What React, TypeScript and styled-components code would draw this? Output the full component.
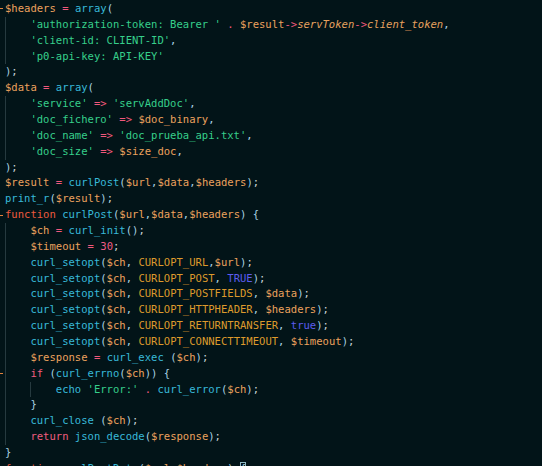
import React from "react";
import styled, { createGlobalStyle, css } from "styled-components";

const Global = createGlobalStyle`
  html, body {
    margin: 0;
    padding: 0;
    width: 542px;
    height: 466px;
    overflow: hidden;
    background: #021418;
  }
  #root { height: 466px; }
`;

type Kind =
  | "v" // variable
  | "op" // operator
  | "fn" // function name
  | "p" // punctuation
  | "s" // string
  | "c" // constant
  | "b" // boolean
  | "kw" // function keyword
  | "kw2" // if / return
  | "n" // number
  | "prop" // property
  | "t" // plain
  | "box"; // matched bracket

const colors: Record<Kind, string> = {
  v: "#eca25e",
  op: "#f2587c",
  fn: "#38b9d8",
  p: "#a9d3e2",
  s: "#36cf8b",
  c: "#dd9a2c",
  b: "#5c5ced",
  kw: "#ec5a3e",
  kw2: "#ef5d7e",
  n: "#ef5a86",
  prop: "#e7a25f",
  t: "#c8d3d6",
  box: "#a9d3e2",
};

const Editor = styled.div`
  box-sizing: border-box;
  width: 542px;
  height: 466px;
  overflow: hidden;
  padding-top: 1px;
  background: #021418;
  font-family: "DejaVu Sans Mono", "Liberation Mono", monospace;
  font-size: 10.55px;
  display: flex;
  flex-direction: column;
`;

const Line = styled.div`
  display: flex;
  align-items: stretch;
  height: 15.86px;
  line-height: 15.86px;
  white-space: pre;
  flex-shrink: 0;
`;

const Gutter = styled.span<{ $mark?: boolean }>`
  width: 5px;
  flex-shrink: 0;
  display: flex;
  align-items: center;
  &::before {
    content: "";
    display: ${(p) => (p.$mark ? "block" : "none")};
    width: 3px;
    height: 1px;
    background: #e2823c;
  }
`;

const Indent = styled.span`
  box-sizing: border-box;
  width: 25.4px;
  flex-shrink: 0;
  border-left: 1px solid #263a3f;
`;

const Code = styled.span`
  display: inline-block;
`;

const Tok = styled.span<{ $k: Kind }>`
  color: ${(p) => colors[p.$k]};
  ${(p) =>
    p.$k === "prop" &&
    css`
      font-style: italic;
    `}
  ${(p) =>
    p.$k === "box" &&
    css`
      outline: 1px solid #8fb8c4;
      outline-offset: -1px;
    `}
`;

type L = { indent: number; mark?: boolean; toks: [Kind, string][] };

const lines: L[] = [
  { indent: 0, mark: true, toks: [["v", "$headers"], ["t", " "], ["op", "="], ["t", " "], ["fn", "array"], ["p", "("]] },
  {
    indent: 1,
    toks: [
      ["s", "'authorization-token: Bearer '"],
      ["t", " "],
      ["op", "."],
      ["t", " "],
      ["v", "$result"],
      ["op", "->"],
      ["prop", "servToken"],
      ["op", "->"],
      ["prop", "client_token"],
      ["p", ","],
    ],
  },
  { indent: 1, toks: [["s", "'client-id: CLIENT-ID'"], ["p", ","]] },
  { indent: 1, toks: [["s", "'p0-api-key: API-KEY'"]] },
  { indent: 0, toks: [["p", ")"], ["t", ";"]] },
  { indent: 0, toks: [["v", "$data"], ["t", " "], ["op", "="], ["t", " "], ["fn", "array"], ["p", "("]] },
  { indent: 1, toks: [["s", "'service'"], ["t", " "], ["op", "=>"], ["t", " "], ["s", "'servAddDoc'"], ["p", ","]] },
  { indent: 1, toks: [["s", "'doc_fichero'"], ["t", " "], ["op", "=>"], ["t", " "], ["v", "$doc_binary"], ["p", ","]] },
  { indent: 1, toks: [["s", "'doc_name'"], ["t", " "], ["op", "=>"], ["t", " "], ["s", "'doc_prueba_api.txt'"], ["p", ","]] },
  { indent: 1, toks: [["s", "'doc_size'"], ["t", " "], ["op", "=>"], ["t", " "], ["v", "$size_doc"], ["p", ","]] },
  { indent: 0, toks: [["p", ")"], ["t", ";"]] },
  {
    indent: 0,
    toks: [
      ["v", "$result"], ["t", " "], ["op", "="], ["t", " "], ["fn", "curlPost"], ["p", "("],
      ["v", "$url"], ["p", ","], ["v", "$data"], ["p", ","], ["v", "$headers"], ["p", ")"], ["t", ";"],
    ],
  },
  { indent: 0, toks: [["fn", "print_r"], ["p", "("], ["v", "$result"], ["p", ")"], ["t", ";"]] },
  {
    indent: 0,
    mark: true,
    toks: [
      ["kw", "function"], ["t", " "], ["fn", "curlPost"], ["p", "("], ["v", "$url"], ["p", ","],
      ["v", "$data"], ["p", ","], ["v", "$headers"], ["p", ")"], ["t", " "], ["p", "{"],
    ],
  },
  { indent: 1, toks: [["v", "$ch"], ["t", " "], ["op", "="], ["t", " "], ["fn", "curl_init"], ["p", "()"], ["t", ";"]] },
  { indent: 1, toks: [["v", "$timeout"], ["t", " "], ["op", "="], ["t", " "], ["n", "30"], ["t", ";"]] },
  { indent: 1, toks: [["fn", "curl_setopt"], ["p", "("], ["v", "$ch"], ["p", ","], ["t", " "], ["c", "CURLOPT_URL"], ["p", ","], ["v", "$url"], ["p", ")"], ["t", ";"]] },
  { indent: 1, toks: [["fn", "curl_setopt"], ["p", "("], ["v", "$ch"], ["p", ","], ["t", " "], ["c", "CURLOPT_POST"], ["p", ","], ["t", " "], ["b", "TRUE"], ["p", ")"], ["t", ";"]] },
  { indent: 1, toks: [["fn", "curl_setopt"], ["p", "("], ["v", "$ch"], ["p", ","], ["t", " "], ["c", "CURLOPT_POSTFIELDS"], ["p", ","], ["t", " "], ["v", "$data"], ["p", ")"], ["t", ";"]] },
  { indent: 1, toks: [["fn", "curl_setopt"], ["p", "("], ["v", "$ch"], ["p", ","], ["t", " "], ["c", "CURLOPT_HTTPHEADER"], ["p", ","], ["t", " "], ["v", "$headers"], ["p", ")"], ["t", ";"]] },
  { indent: 1, toks: [["fn", "curl_setopt"], ["p", "("], ["v", "$ch"], ["p", ","], ["t", " "], ["c", "CURLOPT_RETURNTRANSFER"], ["p", ","], ["t", " "], ["b", "true"], ["p", ")"], ["t", ";"]] },
  { indent: 1, toks: [["fn", "curl_setopt"], ["p", "("], ["v", "$ch"], ["p", ","], ["t", " "], ["c", "CURLOPT_CONNECTTIMEOUT"], ["p", ","], ["t", " "], ["v", "$timeout"], ["p", ")"], ["t", ";"]] },
  { indent: 1, toks: [["v", "$response"], ["t", " "], ["op", "="], ["t", " "], ["fn", "curl_exec"], ["t", " "], ["p", "("], ["v", "$ch"], ["p", ")"], ["t", ";"]] },
  { indent: 1, mark: true, toks: [["kw2", "if"], ["t", " "], ["p", "("], ["fn", "curl_errno"], ["p", "("], ["v", "$ch"], ["p", "))"], ["t", " "], ["p", "{"]] },
  { indent: 2, toks: [["fn", "echo"], ["t", " "], ["s", "'Error:'"], ["t", " "], ["op", "."], ["t", " "], ["fn", "curl_error"], ["p", "("], ["v", "$ch"], ["p", ")"], ["t", ";"]] },
  { indent: 1, toks: [["p", "}"]] },
  { indent: 1, toks: [["fn", "curl_close"], ["t", " "], ["p", "("], ["v", "$ch"], ["p", ")"], ["t", ";"]] },
  { indent: 1, toks: [["kw2", "return"], ["t", " "], ["fn", "json_decode"], ["p", "("], ["v", "$response"], ["p", ")"], ["t", ";"]] },
  { indent: 0, toks: [["p", "}"]] },
  {
    indent: 0,
    mark: true,
    toks: [
      ["kw", "function"], ["t", " "], ["fn", "curlPostData"], ["p", "("], ["v", "$url"], ["p", ","],
      ["v", "$headers"], ["p", ")"], ["t", " "], ["box", "{"],
    ],
  },
];

export default function App() {
  return (
    <>
      <Global />
      <Editor>
        {lines.map((l, i) => (
          <Line key={i}>
            <Gutter $mark={l.mark} />
            {Array.from({ length: l.indent }).map((_, j) => (
              <Indent key={j} />
            ))}
            <Code>
              {l.toks.map(([k, t], j) => (
                <Tok key={j} $k={k}>
                  {t}
                </Tok>
              ))}
            </Code>
          </Line>
        ))}
      </Editor>
    </>
  );
}
